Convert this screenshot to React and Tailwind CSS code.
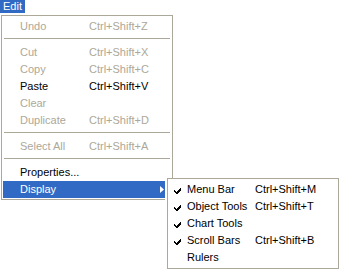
import React from "react";

const mainItems = [
  { label: "Undo", shortcut: "Ctrl+Shift+Z", disabled: true },
  { sep: true },
  { label: "Cut", shortcut: "Ctrl+Shift+X", disabled: true },
  { label: "Copy", shortcut: "Ctrl+Shift+C", disabled: true },
  { label: "Paste", shortcut: "Ctrl+Shift+V" },
  { label: "Clear", disabled: true },
  { label: "Duplicate", shortcut: "Ctrl+Shift+D", disabled: true },
  { sep: true },
  { label: "Select All", shortcut: "Ctrl+Shift+A", disabled: true },
  { sep: true },
  { label: "Properties..." },
  { label: "Display", submenu: true, active: true },
];

const displayItems = [
  { label: "Menu Bar", shortcut: "Ctrl+Shift+M", checked: true },
  { label: "Object Tools", shortcut: "Ctrl+Shift+T", checked: true },
  { label: "Chart Tools", checked: true },
  { label: "Scroll Bars", shortcut: "Ctrl+Shift+B", checked: true },
  { label: "Rulers" },
];

function Check() {
  return (
    <svg width="7" height="7" viewBox="0 0 7 7" className="block">
      <path d="M0 3h1v1h1v1h1V4h1V3h1V2h1V1h1v3H6v1H5v1H4v1H3v1H2V6H1V5H0z" fill="#000" />
    </svg>
  );
}

function Arrow() {
  return (
    <svg width="4" height="7" viewBox="0 0 4 7" className="block">
      <path d="M0 0L4 3.5L0 7z" fill="#fff" />
    </svg>
  );
}

function Submenu() {
  return (
    <div className="absolute left-[162px] top-[-3px] bg-white pl-[2px] z-10">
      <div className="w-[172px] border border-[#aca899] bg-white px-[1px] py-[2px]">
        {displayItems.map((it) => (
          <div key={it.label} className="relative flex h-[17px] items-center text-black">
            <span className="absolute left-[5px] top-[6px]">{it.checked && <Check />}</span>
            <span className="pl-[18px] w-[86px] whitespace-nowrap">{it.label}</span>
            <span className="whitespace-nowrap">{it.shortcut}</span>
          </div>
        ))}
      </div>
    </div>
  );
}

export default function App() {
  return (
    <div
      className="w-[340px] h-[269px] bg-white text-[11px] leading-[13px] overflow-hidden"
      style={{ fontFamily: '"Liberation Sans", Arial, sans-serif' }}
    >
      <div className="inline-block h-[13px] bg-[#316ac5] px-[3px] text-white">Edit</div>

      <div className="mt-[2px] ml-[1px] w-[172px] border border-[#aca899] bg-white px-[1px] pt-[2px] pb-[1px]">
        {mainItems.map((it, i) =>
          it.sep ? (
            <div key={i} className="h-[9px] pt-[3px]">
              <div className="mx-[1px] h-px bg-[#aca899]" />
            </div>
          ) : (
            <div
              key={i}
              className={`relative flex h-[17px] items-center ${
                it.active ? "bg-[#316ac5] text-white" : it.disabled ? "text-[#aca899]" : "text-black"
              }`}
            >
              <span className="pl-[17px] w-[86px] whitespace-nowrap">{it.label}</span>
              <span className="whitespace-nowrap">{it.shortcut}</span>
              {it.submenu && (
                <>
                  <span className="absolute left-[157px] top-[5px]">
                    <Arrow />
                  </span>
                  <Submenu />
                </>
              )}
            </div>
          )
        )}
      </div>
    </div>
  );
}
